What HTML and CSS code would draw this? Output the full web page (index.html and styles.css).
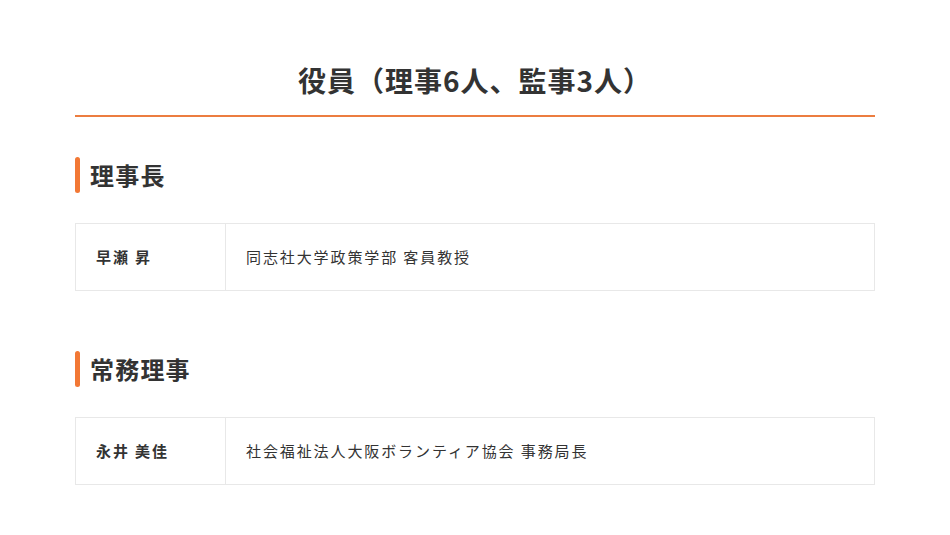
FILE: index.html
```html
<!DOCTYPE html>
<html lang="ja">
<head>
<meta charset="utf-8">
<title>役員</title>
<link rel="stylesheet" href="styles.css">
</head>
<body>
<main class="page">
  <h1 class="title">役員（理事6人、監事3人）</h1>
  <section class="section">
    <h2 class="heading">理事長</h2>
    <div class="row">
      <div class="name">早瀬 昇</div>
      <div class="role">同志社大学政策学部 客員教授</div>
    </div>
  </section>
  <section class="section section-next">
    <h2 class="heading">常務理事</h2>
    <div class="row">
      <div class="name">永井 美佳</div>
      <div class="role">社会福祉法人大阪ボランティア協会 事務局長</div>
    </div>
  </section>
</main>
</body>
</html>
```
FILE: styles.css
```css
* { box-sizing: border-box; }
body {
  margin: 0;
  background: #fff;
  color: #333;
  font-family: "Noto Sans CJK JP", "Noto Sans", sans-serif;
}
.page {
  width: 800px;
  margin: 0 auto;
}
.title {
  margin: 0;
  padding: 59px 0 14px;
  font-size: 28px;
  line-height: 42px;
  font-weight: 700;
  letter-spacing: 1px;
  text-align: center;
  border-bottom: 2px solid #ec7d40;
}
.section { margin-top: 40px; }
.section-next { margin-top: 60px; }
.heading {
  position: relative;
  margin: 0 0 30px;
  padding-left: 15px;
  font-size: 24px;
  line-height: 36px;
  font-weight: 700;
  letter-spacing: 0.05em;
}
.heading::before {
  content: "";
  position: absolute;
  left: 0;
  top: 0;
  width: 5px;
  height: 36px;
  border-radius: 3px;
  background: #f27835;
}
.row {
  display: grid;
  grid-template-columns: 149px 1fr;
  border: 1px solid #e8e8e8;
}
.name, .role {
  padding: 20px;
  font-size: 15px;
  line-height: 26px;
  letter-spacing: 1.9px;
}
.name { font-weight: 700; }
.role { border-left: 1px solid #e8e8e8; }
```
